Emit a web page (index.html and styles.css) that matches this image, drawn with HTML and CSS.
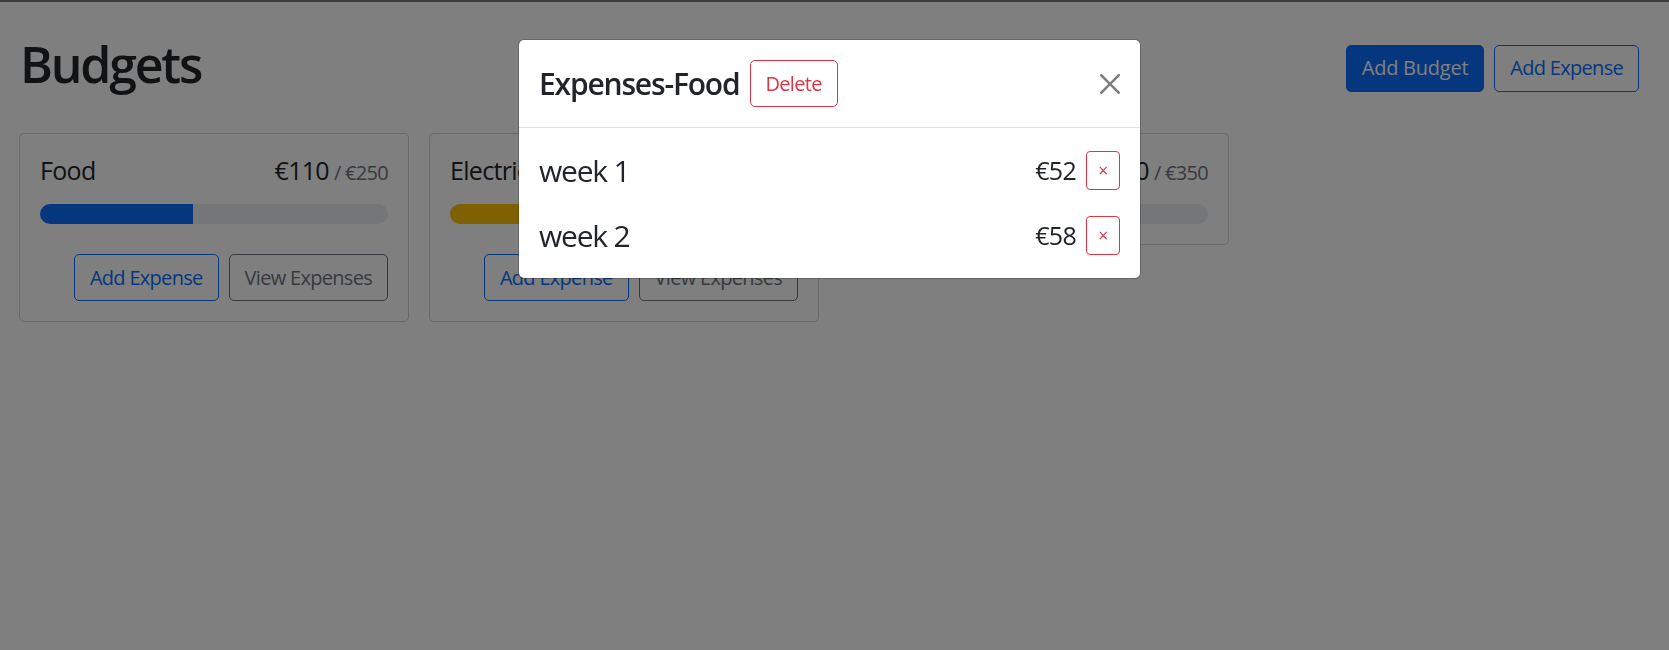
FILE: index.html
```html
<!DOCTYPE html>
<html lang="en">
<head>
<meta charset="utf-8">
<title>Budgets</title>
<link rel="stylesheet" href="styles.css">
</head>
<body>
<div class="topline"></div>
<div class="page">
  <header class="head">
    <h1 class="title">Budgets</h1>
    <button class="btn btn-primary">Add Budget</button>
    <button class="btn btn-outline-primary">Add Expense</button>
  </header>
  <div class="grid">
    <div class="card">
      <div class="card-title">
        <div>Food</div>
        <div>€110<span class="muted">/ €250</span></div>
      </div>
      <div class="progress"><div class="bar" style="width:44%"></div></div>
      <div class="card-actions">
        <button class="btn btn-outline-primary">Add Expense</button>
        <button class="btn btn-outline-secondary">View Expenses</button>
      </div>
    </div>
    <div class="card">
      <div class="card-title">
        <div>Electricity</div>
        <div>€60<span class="muted">/ €100</span></div>
      </div>
      <div class="progress"><div class="bar warning" style="width:60%"></div></div>
      <div class="card-actions">
        <button class="btn btn-outline-primary">Add Expense</button>
        <button class="btn btn-outline-secondary">View Expenses</button>
      </div>
    </div>
    <div class="card">
      <div class="card-title">
        <div>Total</div>
        <div>€170<span class="muted">/ €350</span></div>
      </div>
      <div class="progress"><div class="bar" style="width:48.6%"></div></div>
    </div>
  </div>
</div>
<div class="backdrop"></div>
<div class="modal">
  <div class="modal-header">
    <div class="modal-title">
      <div>Expenses-Food</div>
      <button class="btn btn-outline-danger">Delete</button>
    </div>
    <button class="btn-close" aria-label="Close">
      <svg viewBox="0 0 16 16" width="20" height="20"><path fill="#000" d="M.293.293a1 1 0 011.414 0L8 6.586 14.293.293a1 1 0 111.414 1.414L9.414 8l6.293 6.293a1 1 0 01-1.414 1.414L8 9.414l-6.293 6.293a1 1 0 01-1.414-1.414L6.586 8 .293 1.707a1 1 0 010-1.414z"/></svg>
    </button>
  </div>
  <div class="modal-body">
    <div class="expense">
      <div class="expense-name">week 1</div>
      <div class="expense-amount">€52</div>
      <button class="btn btn-sm btn-outline-danger">×</button>
    </div>
    <div class="expense">
      <div class="expense-name">week 2</div>
      <div class="expense-amount">€58</div>
      <button class="btn btn-sm btn-outline-danger">×</button>
    </div>
  </div>
</div>
</body>
</html>
```

FILE: styles.css
```css
* { box-sizing: border-box; }
html, body { margin: 0; }
body {
  font-family: "Open Sans", "Noto Sans", sans-serif;
  font-size: 20px;
  line-height: 1.5;
  color: #212529;
  background: #fff;
  letter-spacing: -0.035em;
  overflow: hidden;
  height: 650px;
}
.topline { height: 2px; background: #787878; }
.page { padding: 31px 30px 0 19px; }
.head { display: flex; align-items: center; gap: 10px; margin-bottom: 30px; }
.title {
  margin: 0 auto 10px 0; padding: 2px 0 0 1px; height: 60px;
  font-size: 50px; line-height: 58px; font-weight: 600; letter-spacing: -0.044em;
}
.btn {
  font-family: inherit;
  font-size: 20px;
  line-height: 30px;
  padding: 7.5px 15px;
  border: 1px solid transparent;
  border-radius: 5px;
  background: transparent;
  letter-spacing: inherit;
  font-weight: 400;
  white-space: nowrap;
}
.head .btn-primary { letter-spacing: -0.012em; }
.btn-primary { background: #0d6efd; border-color: #0d6efd; color: #fff; }
.btn-outline-primary { color: #0d6efd; border-color: #0d6efd; }
.btn-outline-secondary { color: #6c757d; border-color: #6c757d; }
.btn-outline-danger { color: #dc3545; border-color: #dc3545; }
.btn-sm { font-size: 17.5px; line-height: 26.25px; padding: 5px 10px; border-radius: 4px; min-width: 34px; }
.grid { display: grid; grid-template-columns: repeat(4, 1fr); gap: 20px; align-items: start; }
.card { border: 1px solid rgba(0,0,0,.175); border-radius: 5px; padding: 20px; }
.card-title {
  display: flex; justify-content: space-between; align-items: baseline;
  font-size: 25px; line-height: 30px; margin-bottom: 20px;
  padding-top: 1px; height: 30px;
}
.muted { color: #6c757d; font-size: 20px; margin-left: 5px; }
.progress { height: 20px; background: #e9ecef; border-radius: 10px; overflow: hidden; display: flex; }
.bar { background: #0d6efd; }
.bar.warning { background: #ffc107; }
.card-actions { display: flex; justify-content: flex-end; gap: 10px; margin-top: 30px; }
.backdrop { position: fixed; inset: 0; background: rgba(0,0,0,.5); }
.modal {
  position: fixed; top: 39px; left: 518px; width: 623px;
  background: #fff; background-clip: padding-box;
  border: 1px solid rgba(0,0,0,.2); border-radius: 6px;
}
.modal-header { display: flex; align-items: center; padding: 20px; border-bottom: 1px solid #dee2e6; }
.modal-title {
  display: flex; align-items: center; gap: 10px;
  font-size: 30px; line-height: 45px; font-weight: 600; letter-spacing: -0.039em;
}
.modal-title .btn { letter-spacing: -0.035em; }
.btn-close {
  margin: -5px -5px -5px auto; width: 30px; height: 30px; padding: 5px;
  border: 0; background: transparent; opacity: .5; display: flex;
}
.modal-body { padding: 20px; display: flex; flex-direction: column; gap: 20px; }
.expense { display: flex; align-items: center; gap: 10px; }
.expense-name { margin-right: auto; font-size: 30px; line-height: 45px; letter-spacing: -0.04em; }
.expense-amount { font-size: 25px; line-height: 37.5px; }
```
